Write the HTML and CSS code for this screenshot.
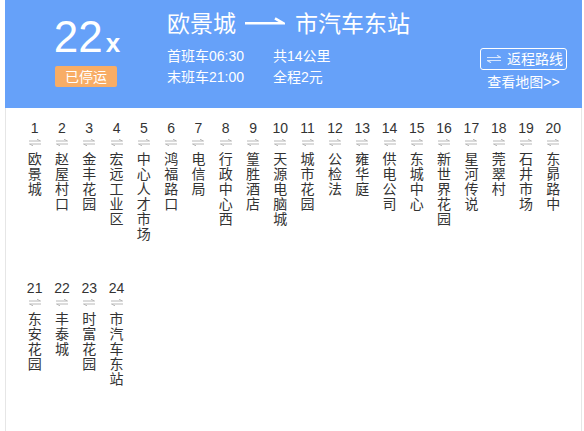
FILE: index.html
```html
<!DOCTYPE html>
<html lang="zh-CN">
<head>
<meta charset="utf-8">
<title>22x</title>
<link rel="stylesheet" href="styles.css">
</head>
<body>
<div class="page">
  <header class="head">
    <div class="line-id">
      <div class="line-no">22<span class="suffix">x</span></div>
      <span class="badge">已停运</span>
    </div>
    <div class="head-main">
      <h1 class="title">欧景城<svg class="dir" width="40" height="8" viewBox="0 0 40 8"><path d="M0 6.3H38.5L30 1.3" fill="none" stroke="#fff" stroke-width="2.6"/></svg>市汽车东站</h1>
      <div class="head-row">
        <div class="info">
          <span class="cell c1">首班车06:30</span><span class="cell">共14公里</span>
          <span class="cell c1">末班车21:00</span><span class="cell">全程2元</span>
        </div>
        <div class="actions">
          <a class="btn"><svg class="swap" width="14" height="8" viewBox="0 0 14 8"><path d="M0 2.5H13.5L10 0.3M14 5.5H0.5L4 7.7" fill="none" stroke="rgba(255,255,255,0.75)" stroke-width="1.2"/></svg>返程路线</a>
          <a class="map">查看地图&gt;&gt;</a>
        </div>
      </div>
    </div>
  </header>
  <ul class="stops">
    <li><span class="num">1</span><svg class="arr" width="12" height="7" viewBox="0 0 12 7"><path d="M0 2H11.5L8 0.2M12 5H0.5L4 6.8" fill="none" stroke="#b8b8b8" stroke-width="1"/></svg><span class="name">欧景城</span></li>
    <li><span class="num">2</span><svg class="arr" width="12" height="7" viewBox="0 0 12 7"><path d="M0 2H11.5L8 0.2M12 5H0.5L4 6.8" fill="none" stroke="#b8b8b8" stroke-width="1"/></svg><span class="name">赵屋村口</span></li>
    <li><span class="num">3</span><svg class="arr" width="12" height="7" viewBox="0 0 12 7"><path d="M0 2H11.5L8 0.2M12 5H0.5L4 6.8" fill="none" stroke="#b8b8b8" stroke-width="1"/></svg><span class="name">金丰花园</span></li>
    <li><span class="num">4</span><svg class="arr" width="12" height="7" viewBox="0 0 12 7"><path d="M0 2H11.5L8 0.2M12 5H0.5L4 6.8" fill="none" stroke="#b8b8b8" stroke-width="1"/></svg><span class="name">宏远工业区</span></li>
    <li><span class="num">5</span><svg class="arr" width="12" height="7" viewBox="0 0 12 7"><path d="M0 2H11.5L8 0.2M12 5H0.5L4 6.8" fill="none" stroke="#b8b8b8" stroke-width="1"/></svg><span class="name">中心人才市场</span></li>
    <li><span class="num">6</span><svg class="arr" width="12" height="7" viewBox="0 0 12 7"><path d="M0 2H11.5L8 0.2M12 5H0.5L4 6.8" fill="none" stroke="#b8b8b8" stroke-width="1"/></svg><span class="name">鸿福路口</span></li>
    <li><span class="num">7</span><svg class="arr" width="12" height="7" viewBox="0 0 12 7"><path d="M0 2H11.5L8 0.2M12 5H0.5L4 6.8" fill="none" stroke="#b8b8b8" stroke-width="1"/></svg><span class="name">电信局</span></li>
    <li><span class="num">8</span><svg class="arr" width="12" height="7" viewBox="0 0 12 7"><path d="M0 2H11.5L8 0.2M12 5H0.5L4 6.8" fill="none" stroke="#b8b8b8" stroke-width="1"/></svg><span class="name">行政中心西</span></li>
    <li><span class="num">9</span><svg class="arr" width="12" height="7" viewBox="0 0 12 7"><path d="M0 2H11.5L8 0.2M12 5H0.5L4 6.8" fill="none" stroke="#b8b8b8" stroke-width="1"/></svg><span class="name">篁胜酒店</span></li>
    <li><span class="num">10</span><svg class="arr" width="12" height="7" viewBox="0 0 12 7"><path d="M0 2H11.5L8 0.2M12 5H0.5L4 6.8" fill="none" stroke="#b8b8b8" stroke-width="1"/></svg><span class="name">天源电脑城</span></li>
    <li><span class="num">11</span><svg class="arr" width="12" height="7" viewBox="0 0 12 7"><path d="M0 2H11.5L8 0.2M12 5H0.5L4 6.8" fill="none" stroke="#b8b8b8" stroke-width="1"/></svg><span class="name">城市花园</span></li>
    <li><span class="num">12</span><svg class="arr" width="12" height="7" viewBox="0 0 12 7"><path d="M0 2H11.5L8 0.2M12 5H0.5L4 6.8" fill="none" stroke="#b8b8b8" stroke-width="1"/></svg><span class="name">公检法</span></li>
    <li><span class="num">13</span><svg class="arr" width="12" height="7" viewBox="0 0 12 7"><path d="M0 2H11.5L8 0.2M12 5H0.5L4 6.8" fill="none" stroke="#b8b8b8" stroke-width="1"/></svg><span class="name">雍华庭</span></li>
    <li><span class="num">14</span><svg class="arr" width="12" height="7" viewBox="0 0 12 7"><path d="M0 2H11.5L8 0.2M12 5H0.5L4 6.8" fill="none" stroke="#b8b8b8" stroke-width="1"/></svg><span class="name">供电公司</span></li>
    <li><span class="num">15</span><svg class="arr" width="12" height="7" viewBox="0 0 12 7"><path d="M0 2H11.5L8 0.2M12 5H0.5L4 6.8" fill="none" stroke="#b8b8b8" stroke-width="1"/></svg><span class="name">东城中心</span></li>
    <li><span class="num">16</span><svg class="arr" width="12" height="7" viewBox="0 0 12 7"><path d="M0 2H11.5L8 0.2M12 5H0.5L4 6.8" fill="none" stroke="#b8b8b8" stroke-width="1"/></svg><span class="name">新世界花园</span></li>
    <li><span class="num">17</span><svg class="arr" width="12" height="7" viewBox="0 0 12 7"><path d="M0 2H11.5L8 0.2M12 5H0.5L4 6.8" fill="none" stroke="#b8b8b8" stroke-width="1"/></svg><span class="name">星河传说</span></li>
    <li><span class="num">18</span><svg class="arr" width="12" height="7" viewBox="0 0 12 7"><path d="M0 2H11.5L8 0.2M12 5H0.5L4 6.8" fill="none" stroke="#b8b8b8" stroke-width="1"/></svg><span class="name">莞翠村</span></li>
    <li><span class="num">19</span><svg class="arr" width="12" height="7" viewBox="0 0 12 7"><path d="M0 2H11.5L8 0.2M12 5H0.5L4 6.8" fill="none" stroke="#b8b8b8" stroke-width="1"/></svg><span class="name">石井市场</span></li>
    <li><span class="num">20</span><svg class="arr" width="12" height="7" viewBox="0 0 12 7"><path d="M0 2H11.5L8 0.2M12 5H0.5L4 6.8" fill="none" stroke="#b8b8b8" stroke-width="1"/></svg><span class="name">东昴路中</span></li>
    <li><span class="num">21</span><svg class="arr" width="12" height="7" viewBox="0 0 12 7"><path d="M0 2H11.5L8 0.2M12 5H0.5L4 6.8" fill="none" stroke="#b8b8b8" stroke-width="1"/></svg><span class="name">东安花园</span></li>
    <li><span class="num">22</span><svg class="arr" width="12" height="7" viewBox="0 0 12 7"><path d="M0 2H11.5L8 0.2M12 5H0.5L4 6.8" fill="none" stroke="#b8b8b8" stroke-width="1"/></svg><span class="name">丰泰城</span></li>
    <li><span class="num">23</span><svg class="arr" width="12" height="7" viewBox="0 0 12 7"><path d="M0 2H11.5L8 0.2M12 5H0.5L4 6.8" fill="none" stroke="#b8b8b8" stroke-width="1"/></svg><span class="name">时富花园</span></li>
    <li><span class="num">24</span><svg class="arr" width="12" height="7" viewBox="0 0 12 7"><path d="M0 2H11.5L8 0.2M12 5H0.5L4 6.8" fill="none" stroke="#b8b8b8" stroke-width="1"/></svg><span class="name">市汽车东站</span></li>
  </ul>
</div>
</body>
</html>
```

FILE: styles.css
```css
html, body {
  margin: 0;
  padding: 0;
  background: #fff;
}
body {
  font-family: "Liberation Sans", "Noto Sans CJK SC", sans-serif;
  color: #333;
}
.page {
  margin-left: 5px;
  width: 577px;
  min-height: 440px;
  box-sizing: border-box;
  border-left: 1px solid #e6e6e6;
  border-right: 1px solid #e6e6e6;
}
.head {
  background: #66a1f9;
  height: 108px;
  margin: 0 -1px;
  display: flex;
  color: #fff;
}
.line-id {
  width: 162px;
  display: flex;
  flex-direction: column;
  align-items: center;
  padding-top: 13px;
  box-sizing: border-box;
}
.line-no {
  font-size: 44px;
  line-height: 48px;
  height: 48px;
  padding-left: 2px;
}
.suffix {
  font-size: 26px;
  font-weight: bold;
  margin-left: 3px;
}
.badge {
  margin-top: 5px;
  background: #f8ad66;
  border-radius: 2px;
  width: 62px;
  height: 21px;
  line-height: 21px;
  text-align: center;
  font-size: 14px;
  font-family: "Noto Sans CJK SC", sans-serif;
}
.head-main {
  flex: 1;
  padding-right: 15px;
}
.title {
  margin: 0;
  padding-top: 10px;
  font-size: 23px;
  line-height: 24px;
  font-weight: normal;
  font-family: "Noto Sans CJK SC", sans-serif;
  display: flex;
  align-items: center;
}
.dir {
  margin: 0 10px 0 9px;
  position: relative;
  top: -1px;
}
.head-row {
  display: flex;
  justify-content: space-between;
  margin-top: 12px;
}
.info {
  display: grid;
  grid-template-columns: 106px auto;
  font-size: 14px;
  line-height: 21px;
  align-content: start;
}
.actions {
  display: flex;
  flex-direction: column;
  align-items: center;
  margin-top: 2px;
}
.btn {
  display: flex;
  align-items: center;
  height: 20px;
  border: 1px solid #fff;
  border-radius: 3px;
  padding: 0 3px 0 6px;
  font-size: 14px;
  line-height: 20px;
}
.swap {
  margin-right: 6px;
}
.map {
  font-size: 14px;
  line-height: 18px;
  margin-top: 3px;
}
.stops {
  list-style: none;
  margin: 0;
  padding: 12px 0 0 15px;
  display: flex;
  flex-wrap: wrap;
}
.stops li {
  width: 27.3px;
  height: 160px;
  display: flex;
  flex-direction: column;
  align-items: center;
}
.num {
  font-size: 14px;
  line-height: 16px;
  color: #333;
}
.arr {
  display: block;
  margin-top: 3px;
}
.name {
  width: 14px;
  margin-top: 5px;
  font-size: 14px;
  line-height: 15px;
  font-family: "Noto Sans CJK SC", sans-serif;
  color: #333;
  word-break: break-all;
}
```
